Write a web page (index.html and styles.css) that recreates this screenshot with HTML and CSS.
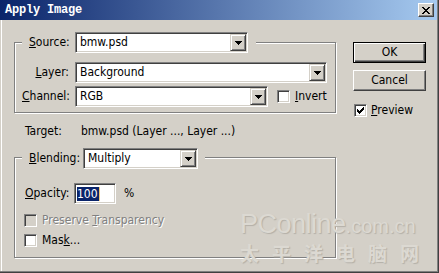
FILE: index.html
```html
<!DOCTYPE html>
<html>
<head>
<meta charset="utf-8">
<title>Apply Image</title>
<link rel="stylesheet" href="styles.css">
</head>
<body>
<div class="window">
  <div class="titlebar">
    <span class="title">Apply Image</span>
    <span class="close-btn"><svg width="8" height="7" viewBox="0 0 8 7" shape-rendering="crispEdges"><path d="M0 0h2v1h-2zM6 0h2v1h-2zM1 1h2v1h-2zM5 1h2v1h-2zM2 2h4v1h-4zM3 3h2v1h-2zM2 4h4v1h-4zM1 5h2v1h-2zM5 5h2v1h-2zM0 6h2v1h-2zM6 6h2v1h-2z" fill="#000"/></svg></span>
  </div>
  <div class="content">
    <div class="main">
      <div class="group group-source">
        <div class="group-head">
          <span class="head-label lbl-source"><u>S</u>ource:</span>
          <div class="combo w-source"><span class="combo-value">bmw.psd</span><span class="drop-btn"><svg width="7" height="4" viewBox="0 0 7 4" shape-rendering="crispEdges"><path d="M0 0h7v1h-7zM1 1h5v1h-5zM2 2h3v1h-3zM3 3h1v1h-1z" fill="#000"/></svg></span></div>
        </div>
        <div class="rows">
          <span class="row-label"><u>L</u>ayer:</span>
          <div class="combo w-layer"><span class="combo-value">Background</span><span class="drop-btn"><svg width="7" height="4" viewBox="0 0 7 4" shape-rendering="crispEdges"><path d="M0 0h7v1h-7zM1 1h5v1h-5zM2 2h3v1h-3zM3 3h1v1h-1z" fill="#000"/></svg></span></div>
          <span class="row-label"><u>C</u>hannel:</span>
          <div class="channel-line">
            <div class="combo w-channel"><span class="combo-value">RGB</span><span class="drop-btn"><svg width="7" height="4" viewBox="0 0 7 4" shape-rendering="crispEdges"><path d="M0 0h7v1h-7zM1 1h5v1h-5zM2 2h3v1h-3zM3 3h1v1h-1z" fill="#000"/></svg></span></div>
            <span class="checkbox invert-box"></span>
            <span class="check-text"><u>I</u>nvert</span>
          </div>
        </div>
      </div>
      <div class="target">
        <span class="target-label">Target:</span>
        <span class="target-value">bmw.psd (Layer ..., Layer ...)</span>
      </div>
      <div class="group group-blend">
        <div class="group-head">
          <span class="head-label lbl-blend"><u>B</u>lending:</span>
          <div class="combo w-blend"><span class="combo-value">Multiply</span><span class="drop-btn"><svg width="7" height="4" viewBox="0 0 7 4" shape-rendering="crispEdges"><path d="M0 0h7v1h-7zM1 1h5v1h-5zM2 2h3v1h-3zM3 3h1v1h-1z" fill="#000"/></svg></span></div>
        </div>
        <div class="blend-body">
          <div class="opacity-row">
            <span class="opacity-label"><u>O</u>pacity:</span>
            <div class="textfield"><span class="selection">100</span><span class="caret"></span></div>
            <span class="percent">%</span>
          </div>
          <div class="check-row disabled">
            <span class="checkbox checkbox-disabled"></span>
            <span class="check-text">Preserve <u>T</u>ransparency</span>
          </div>
          <div class="check-row mask-row">
            <span class="checkbox"></span>
            <span class="check-text">Mas<u>k</u>...</span>
          </div>
        </div>
      </div>
    </div>
    <div class="side">
      <div class="button button-default">OK</div>
      <div class="button button-cancel">Cancel</div>
      <div class="check-row preview-row">
        <span class="checkbox"><svg width="7" height="7" viewBox="0 0 7 7" shape-rendering="crispEdges"><path d="M6 0h1v1h-1zM5 1h2v1h-2zM0 2h1v1h-1zM4 2h3v1h-3zM0 3h2v1h-2zM3 3h3v1h-3zM0 4h5v1h-5zM1 5h3v1h-3zM2 6h1v1h-1z" fill="#000"/></svg></span>
        <span class="check-text"><u>P</u>review</span>
      </div>
    </div>
  </div>
  <div class="watermark">
    <div class="wm-line1"><span class="wm-big">PConline</span><span class="wm-small">.com.cn</span></div>
    <div class="wm-line2">太平洋电脑网</div>
  </div>
</div>
</body>
</html>
```
FILE: styles.css
```css
* { box-sizing: border-box; }
html, body { margin: 0; padding: 0; }
body {
  background: #d4d0c8;
  font-family: "DejaVu Sans Condensed", "DejaVu Sans", sans-serif;
  font-size: 12px;
  line-height: 13px;
  color: #000;
}
u { text-decoration: underline; text-underline-offset: 1px; text-decoration-thickness: 1px; }

.window {
  position: relative;
  width: 439px;
  height: 273px;
  background: #d4d0c8;
  border-right: 1px solid #404040;
  border-bottom: 1px solid #404040;
  box-shadow: inset -1px -1px #808080, inset 1px 0 #d4d0c8, inset 2px 0 #fff;
  overflow: hidden;
}

.titlebar {
  height: 20px;
  margin-right: 1px;
  display: flex;
  align-items: flex-start;
  background: linear-gradient(to right, #0a246a, #a6caf0);
  padding-left: 5px;
}
.title {
  font-family: "Liberation Mono", monospace;
  font-weight: bold;
  font-size: 12px;
  letter-spacing: -0.2px;
  line-height: 20px;
  color: #fff;
}
.close-btn {
  margin-left: auto;
  margin-right: 3px;
  margin-top: 3px;
  width: 16px;
  height: 14px;
  background: #d4d0c8;
  border: 1px solid;
  border-color: #fff #404040 #404040 #fff;
  box-shadow: inset -1px -1px #808080;
  display: flex;
  align-items: center;
  justify-content: center;
}
.close-btn svg { display: block; }

.content {
  display: flex;
  padding: 12px 0 0 14px;
}
.main { width: 322px; }

.group {
  border: 1px solid #808080;
  box-shadow: inset 1px 1px #fff, 1px 1px #fff;
}
.group-source { margin-top: 10px; }
.group-blend { margin-top: 19px; }

.group-head {
  display: flex;
  align-items: center;
  width: max-content;
  margin: -11px 0 0 7px;
  padding: 0 8px 0 7px;
  background: #d4d0c8;
  gap: 6px;
}
.group-blend .group-head { margin-top: -10px; padding-right: 7px; }
.head-label { flex: none; white-space: nowrap; }
.lbl-source { width: 40px; }
.lbl-blend { width: 48px; }

.combo {
  height: 21px;
  flex: none;
  display: flex;
  align-items: stretch;
  background: #fff;
  border: 1px solid;
  border-color: #808080 #fff #fff #808080;
  box-shadow: inset 1px 1px #404040, inset -1px -1px #d4d0c8;
  padding: 1px;
}
.combo-value {
  flex: 1;
  padding-left: 3px;
  line-height: 17px;
  white-space: nowrap;
}
.drop-btn {
  width: 16px;
  height: 17px;
  background: #d4d0c8;
  border: 1px solid;
  border-color: #d4d0c8 #404040 #404040 #d4d0c8;
  box-shadow: inset 1px 1px #fff, inset -1px -1px #808080;
  display: flex;
  align-items: center;
  justify-content: center;
}
.drop-btn svg { display: block; margin-top: 1px; }
.w-source { width: 173px; }
.w-layer { width: 252px; }
.w-channel { width: 193px; }
.w-blend { width: 115px; }

.rows {
  display: grid;
  grid-template-columns: 47px auto;
  column-gap: 6px;
  row-gap: 3px;
  align-items: center;
  padding: 9px 0 5px 7px;
}
.row-label { text-align: right; white-space: nowrap; }
.channel-line { display: flex; align-items: center; }
.invert-box { margin-left: 9px; }

.checkbox {
  width: 13px;
  height: 13px;
  flex: none;
  background: #fff;
  border: 1px solid;
  border-color: #808080 #fff #fff #808080;
  box-shadow: inset 1px 1px #404040, inset -1px -1px #d4d0c8;
  display: flex;
  align-items: center;
  justify-content: center;
}
.checkbox svg { display: block; }
.checkbox-disabled { background: #d4d0c8; }
.check-text { margin-left: 5px; white-space: nowrap; }

.target {
  display: flex;
  margin-top: 12px;
  padding-left: 11px;
  white-space: nowrap;
}
.target-label { width: 56px; }

.blend-body { padding: 14px 0 10px 10px; }
.opacity-row { display: flex; align-items: center; }
.opacity-label { width: 49px; white-space: nowrap; }
.textfield {
  width: 42px;
  height: 21px;
  background: #fff;
  border: 1px solid;
  border-color: #808080 #fff #fff #808080;
  box-shadow: inset 1px 1px #404040, inset -1px -1px #d4d0c8;
  display: flex;
  align-items: center;
  padding-left: 2px;
}
.selection {
  background: #0a246a;
  color: #fff;
  line-height: 14px;
  padding: 0 1px 0 0;
}
.caret {
  width: 1px;
  height: 14px;
  background: #f0c87a;
}
.percent { margin-left: 8px; }

.check-row {
  display: flex;
  align-items: center;
  height: 13px;
}
.blend-body .check-row { margin-left: -1px; }
.disabled { margin-top: 10px; color: #808080; }
.disabled .check-text { text-shadow: 1px 1px 0 #fff; }
.mask-row { margin-top: 7px; }

.side {
  margin-left: 17px;
  padding-top: 10px;
  width: 73px;
}
.button {
  width: 73px;
  height: 21px;
  background: #d4d0c8;
  display: flex;
  align-items: center;
  justify-content: center;
}
.button-default {
  border: 1px solid #000;
  box-shadow: inset 1px 1px #fff, inset -1px -1px #404040, inset -2px -2px #808080;
}
.button-cancel {
  margin-top: 7px;
  border: 1px solid;
  border-color: #fff #404040 #404040 #fff;
  box-shadow: inset -1px -1px #808080;
}
.preview-row { margin-top: 13px; margin-left: 1px; }
.preview-row .check-text { margin-left: 4px; }

.watermark {
  position: absolute;
  left: 240px;
  top: 211px;
  color: #dcd9d2;
  text-shadow: 1px 1px 1px #b4b0a8;
  font-family: "Liberation Sans", Arial, sans-serif;
  pointer-events: none;
}
.wm-line1 { line-height: 26px; white-space: nowrap; }
.wm-big { font-size: 27px; letter-spacing: -0.5px; }
.wm-small { font-size: 20px; }
.wm-line2 {
  font-family: "Noto Sans CJK SC", sans-serif;
  font-size: 19px;
  line-height: 22px;
  letter-spacing: 13px;
  font-weight: bold;
  white-space: nowrap;
}
```
